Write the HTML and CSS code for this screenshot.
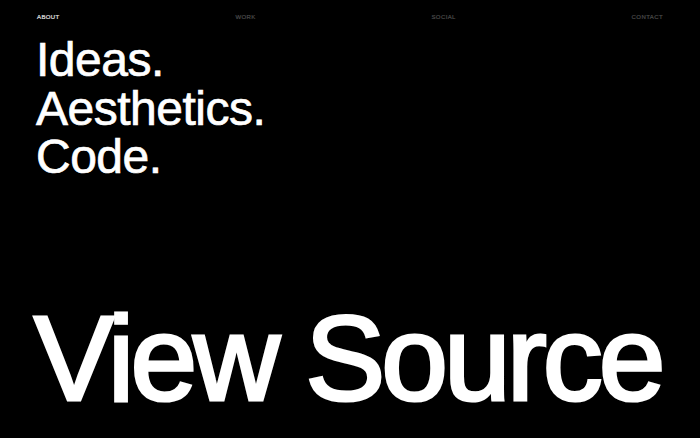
FILE: index.html
```
<!DOCTYPE html>
<html>
<head>
 <meta charset="utf-8">
 <title>View Source</title>
 <link rel="stylesheet" href="styles.css">
</head>
<body>
 <nav class="nav">
  <a class="nav-link active" href="#about">About</a>
  <a class="nav-link" href="#work">Work</a>
  <a class="nav-link" href="#social">Social</a>
  <a class="nav-link" href="#contact">Contact</a>
 </nav>
 <main class="hero">
  <h1 class="tagline">
   <span>Ideas.</span>
   <span>Aesthetics.</span>
   <span>Code.</span>
  </h1>
  <p class="title">View Source</p>
 </main>
</body>
</html>
```

FILE: styles.css
```
html, body {
 margin: 0;
 height: 100%;
 background: #000;
 color: #fff;
 font-family: "Liberation Sans", Arial, Helvetica, sans-serif;
}
body {
 display: flex;
 flex-direction: column;
 overflow: hidden;
}
.nav {
 display: flex;
 justify-content: space-between;
 padding: 14px 37px 0;
 height: 10px;
}
.nav-link {
 font-size: 6px;
 line-height: 6px;
 letter-spacing: 0.4px;
 text-transform: uppercase;
 text-decoration: none;
 color: #4a4a4a;
 -webkit-text-stroke: 0.2px currentColor;
}
.nav-link.active {
 color: #e0e0e0;
}
.hero {
 flex: 1;
 display: flex;
 flex-direction: column;
 padding: 0 36px 20px;
}
.tagline {
 margin: 12px 0 0;
 font-size: 48px;
 font-weight: normal;
 line-height: 48.5px;
 letter-spacing: -0.5px;
 -webkit-text-stroke: 0.7px #fff;
}
.tagline span {
 display: block;
}
.title {
 margin: auto 0 0 -2px;
 font-size: 120px;
 line-height: 1;
 letter-spacing: -4px;
 white-space: nowrap;
 -webkit-text-stroke: 3.2px #fff;
}
```
